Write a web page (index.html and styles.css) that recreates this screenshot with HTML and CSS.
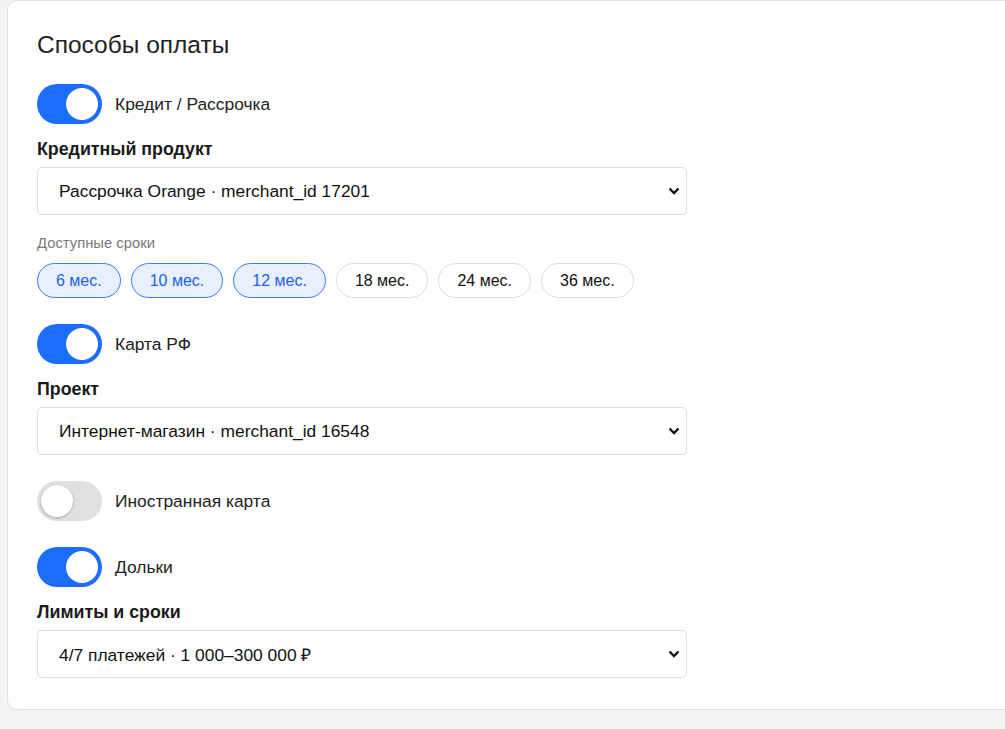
FILE: index.html
```html
<!DOCTYPE html>
<html lang="ru">
<head>
<meta charset="utf-8">
<link rel="stylesheet" href="styles.css">
</head>
<body>
<div class="card">
  <h2 class="title">Способы оплаты</h2>

  <section class="method">
    <div class="toggle-row">
      <span class="toggle on"><span class="knob"></span></span>
      <span class="toggle-label">Кредит / Рассрочка</span>
    </div>
    <div class="field">
      <div class="field-label">Кредитный продукт</div>
      <div class="select"><span>Рассрочка Orange · merchant_id 17201</span><svg class="chev" width="12" height="8" viewBox="0 0 12 8"><path d="M1.5 1.5l4.5 4.5 4.5-4.5" fill="none" stroke="#111" stroke-width="2.4"/></svg></div>
    </div>
    <div class="terms">
      <div class="terms-label">Доступные сроки</div>
      <div class="chips">
        <span class="chip active">6 мес.</span>
        <span class="chip active">10 мес.</span>
        <span class="chip active">12 мес.</span>
        <span class="chip">18 мес.</span>
        <span class="chip">24 мес.</span>
        <span class="chip">36 мес.</span>
      </div>
    </div>
  </section>

  <section class="method">
    <div class="toggle-row">
      <span class="toggle on"><span class="knob"></span></span>
      <span class="toggle-label">Карта РФ</span>
    </div>
    <div class="field">
      <div class="field-label">Проект</div>
      <div class="select"><span>Интернет-магазин · merchant_id 16548</span><svg class="chev" width="12" height="8" viewBox="0 0 12 8"><path d="M1.5 1.5l4.5 4.5 4.5-4.5" fill="none" stroke="#111" stroke-width="2.4"/></svg></div>
    </div>
  </section>

  <section class="method">
    <div class="toggle-row">
      <span class="toggle"><span class="knob"></span></span>
      <span class="toggle-label">Иностранная карта</span>
    </div>
  </section>

  <section class="method">
    <div class="toggle-row">
      <span class="toggle on"><span class="knob"></span></span>
      <span class="toggle-label">Дольки</span>
    </div>
    <div class="field">
      <div class="field-label">Лимиты и сроки</div>
      <div class="select"><span>4/7 платежей · 1 000–300 000 ₽</span><svg class="chev" width="12" height="8" viewBox="0 0 12 8"><path d="M1.5 1.5l4.5 4.5 4.5-4.5" fill="none" stroke="#111" stroke-width="2.4"/></svg></div>
    </div>
  </section>
</div>
</body>
</html>
```

FILE: styles.css
```css
html, body {
  margin: 0;
  padding: 0;
  background: #f3f3f3;
  overflow: hidden;
}
body {
  font-family: "Liberation Sans", Arial, sans-serif;
  color: #1a1a1a;
}
.card {
  margin: 0 -40px 0 7px;
  background: #fff;
  border: 1px solid #e2e2e2;
  border-radius: 10px;
  padding: 31px 29px 31px 29px;
  display: flex;
  flex-direction: column;
  gap: 26px;
}
.title {
  margin: 0;
  font-size: 24.5px;
  line-height: 26px;
  font-weight: 400;
  color: #222;
}
.method {
  display: flex;
  flex-direction: column;
}
.toggle-row {
  display: flex;
  align-items: center;
  gap: 13px;
  height: 40px;
}
.toggle {
  position: relative;
  width: 65px;
  height: 40px;
  border-radius: 20px;
  background: #e0e0e0;
  flex: none;
}
.toggle.on {
  background: #1b6dfb;
}
.knob {
  position: absolute;
  top: 4px;
  left: 4px;
  width: 32px;
  height: 32px;
  border-radius: 50%;
  background: #fff;
  box-shadow: 0 1px 3px rgba(0,0,0,0.25);
}
.toggle.on .knob {
  left: 29px;
  box-shadow: none;
}
.toggle-label {
  font-size: 17.4px;
  line-height: 20px;
  color: #222;
}
.field {
  margin-top: 15px;
  width: 650px;
}
.field-label {
  font-size: 17.8px;
  line-height: 20px;
  font-weight: 700;
  color: #1a1a1a;
  margin-bottom: 8px;
}
.select {
  box-sizing: border-box;
  height: 48px;
  border: 1px solid #dedede;
  border-radius: 5px;
  padding: 0 5px 0 21px;
  display: flex;
  align-items: center;
  justify-content: space-between;
  font-size: 17.4px;
  color: #111;
}
.chev {
  display: block;
  margin-right: 1px;
}
.terms {
  margin-top: 20px;
}
.terms-label {
  font-size: 14.8px;
  line-height: 17px;
  color: #7a7a7a;
  margin-bottom: 11px;
}
.chips {
  display: flex;
  gap: 10px;
}
.chip {
  box-sizing: border-box;
  height: 35px;
  padding: 0 18px;
  border: 1px solid #dcdcdc;
  border-radius: 18px;
  display: flex;
  align-items: center;
  font-size: 16px;
  color: #111;
  background: #fff;
}
.chip.active {
  background: #e8f0fe;
  border-color: #3b7cf0;
  color: #1e62e6;
}
```
